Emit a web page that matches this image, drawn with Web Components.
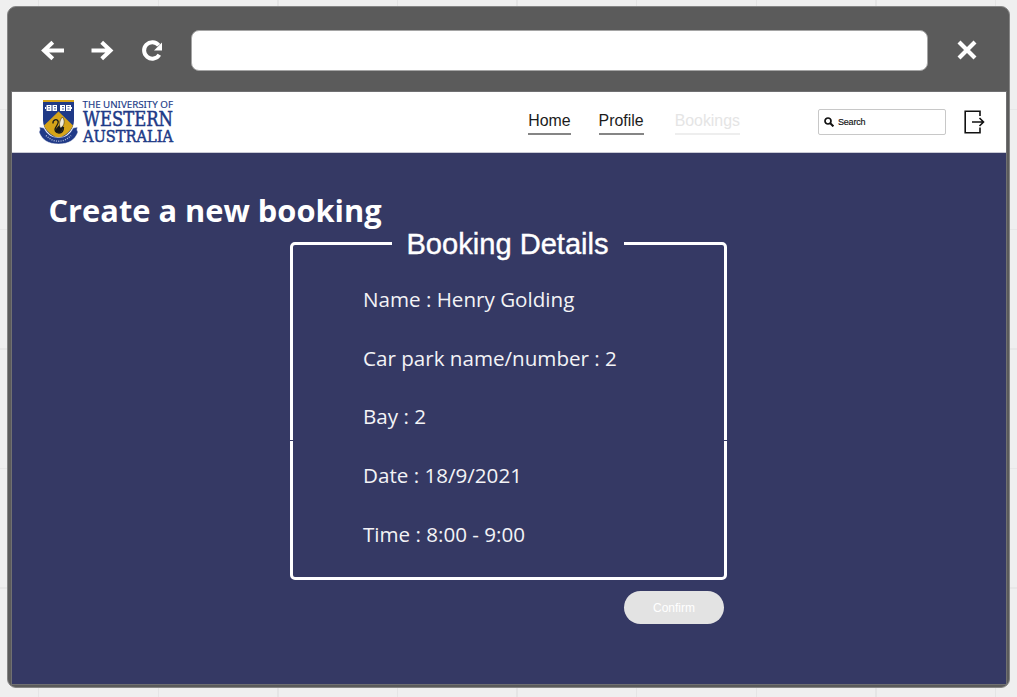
<!DOCTYPE html>
<html lang="en">
<head>
<meta charset="utf-8">
<title>Create a new booking</title>
<style>
html,body{margin:0;width:100%;height:100%;overflow:hidden}
body{font-family:"Liberation Sans",Arial,sans-serif;background-color:#efefef;
background-image:repeating-linear-gradient(90deg,transparent 0 38px,#e5e5e5 38px 39.5px,transparent 39.5px 119.6px),repeating-linear-gradient(180deg,transparent 0 109px,#e7e7e7 109px 110.5px,transparent 110.5px 119.6px)}
</style>
</head>
<body>
<browser-window>
  <site-header>
    <nav-link>Home</nav-link>
    <nav-link>Profile</nav-link>
    <nav-link current>Bookings</nav-link>
  </site-header>
  <booking-page heading="Create a new booking">
    <booking-details legend="Booking Details">
      <detail-row>Name : Henry Golding</detail-row>
      <detail-row>Car park name/number : 2</detail-row>
      <detail-row>Bay : 2</detail-row>
      <detail-row>Date : 18/9/2021</detail-row>
      <detail-row>Time : 8:00 - 9:00</detail-row>
    </booking-details>
    <confirm-button slot="action">Confirm</confirm-button>
  </booking-page>
</browser-window>
<script>
const define = (name, html, setup) => customElements.define(name, class extends HTMLElement {
  constructor() {
    super();
    this.attachShadow({mode: 'open'}).innerHTML = html;
  }
  connectedCallback() { if (setup) setup(this, this.shadowRoot); }
});

define('browser-window', `
<style>
:host{display:block;box-sizing:border-box;height:100%;padding:6px 7px 9px 7px}
.frame{box-sizing:border-box;height:100%;display:flex;flex-direction:column;background:#5b5b5b;border:1px solid #858585;border-radius:9px;padding:0 3px 3px 4px}
.bar{flex:none;box-sizing:border-box;height:85px;display:flex;align-items:center;padding:1px 24px 0 25px}
.bar svg{flex:none;display:block}
.address{flex:1;box-sizing:border-box;height:41px;margin:1px 24px 0 22px;border-radius:8px;background:#fff;border:1px solid #a5a5a5}
.view{flex:1;min-height:0;display:flex;flex-direction:column;background:#353964;box-shadow:0 0 0 1px #85858a80}
</style>
<div class="frame">
  <div class="bar">
    <svg width="132" height="30" viewBox="0 0 132 30" fill="none" stroke="#fff" stroke-width="4">
      <path d="M27 15.500H7M15.800 7.200L7 15.500l8.800 8.300"/>
      <path d="M54.500 15.500h19M64.700 7.200l8.800 8.300-8.800 8.300"/>
      <path d="M122.300 19.700A8.200 8.200 0 1 1 121.700 10.300"/>
      <path d="M125 7.500v8h-8z" fill="#fff" stroke="none"/>
    </svg>
    <div class="address"></div>
    <svg width="30" height="30" viewBox="0 0 30 30" stroke="#fff" stroke-width="4.200"><path d="M7 7l16 16M23 7L7 23"/></svg>
  </div>
  <div class="view"><slot></slot></div>
</div>`);

define('site-header', `
<style>
:host{flex:none;box-sizing:border-box;height:61px;display:flex;align-items:flex-start;background:#fff;border-bottom:1px solid #c9cad5;padding:0 21px 0 26px}
nav{display:flex;gap:28px;margin:19px 78px 0 auto}
</style>
<uwa-logo></uwa-logo>
<nav><slot></slot></nav>
<search-box></search-box>
<exit-icon></exit-icon>`);

define('uwa-logo', `
<style>
:host{display:flex;padding-top:6px}
svg{display:block;flex:none}
.words{display:block;flex:none;overflow:visible}
text{fill:#203a87;stroke:#203a87}
.small{font:9.600px "Noto Sans",sans-serif;stroke-width:.15}
.large{font-family:"DejaVu Serif Condensed","DejaVu Serif",serif;stroke-width:.5}
</style>
<svg width="42" height="50" viewBox="38 98 42 50">
  <path d="M43 100h31v20c0 9-6 15-15.500 20C49 135 43 129 43 120z" fill="#203a87"/>
  <path d="M43 100h31v2H43z" fill="#d6a419"/>
  <path d="M58.500 111.500L73 125.500c-2.500 6-8 10-14.500 13-6.500-3-12-7-14.500-13z" fill="#d6a419"/>
  <g fill="#fff"><path d="M46.500 105h5v6h-5zM52.500 105h4.500v6h-4.500zM60 105h5v6h-5zM66 105h5v6h-5z"/><path d="M45 107h1v2h-1zM71 107h1v2h-1z"/></g>
  <path d="M48 106.500h2M48 109h2M54 106.500h2M54 109h2M62 106.500h2M62 109h2M67.500 106.500h2M67.500 109h2" stroke="#203a87" stroke-width=".8"/>
  <path d="M53 123.500c-.5-3.500 4-5.500 5.200-2 .8 3-3.200 5-3.200 8 0 2 2 3.500 4 3.500 3 0 4.500-2.500 4.500-6" fill="none" stroke="#17191b" stroke-width="1.300"/>
  <path d="M55 131c.5-3 3-4 4.500-6l2.500-3c2 3 1.500 8-1 10-2 1.500-4.500 1-6-1z" fill="#17191b"/>
  <path d="M60.500 128c-2-3.500-.5-8.500 2-11 2.800 3.500 2 9-2 11z" fill="#f3ecd5" stroke="#17191b" stroke-width=".5"/>
  <path d="M39.500 127l4.500 1c3.200 6.500 8 9.500 14.500 9.500s11.500-3 14.500-9.500l4.500-1-.5 3 1 2c-3 8-9 12-19.500 12s-16.500-4-19.500-12l1-2z" fill="#203a87" stroke="#fff" stroke-width=".5"/>
  <path d="M46 135.500c4 4 8 5.700 12.500 5.700s8.500-1.700 12.500-5.700" fill="none" stroke="#aeb9d8" stroke-width="1.400" stroke-dasharray="1 1.300"/>
</svg>
<svg class="words" width="95" height="50" viewBox="80 98 95 50">
  <text class="small" x="82.500" y="108.300" textLength="90.500" lengthAdjust="spacingAndGlyphs">THE UNIVERSITY OF</text>
  <text class="large" x="83" y="126" font-size="20" textLength="90" lengthAdjust="spacingAndGlyphs">WESTERN</text>
  <text class="large" x="83" y="142" font-size="17" textLength="90" lengthAdjust="spacingAndGlyphs">AUSTRALIA</text>
</svg>`);

define('nav-link', `
<style>
:host{display:block;box-sizing:border-box;height:24px;border-bottom:2px solid #858585;font-size:15.900px;line-height:19px;color:#1b1b1b;white-space:nowrap}
:host([current]){color:#e5e5e5;border-color:#eee;margin-left:3px}
</style><slot></slot>`);

define('search-box', `
<style>
:host{flex:none;box-sizing:border-box;width:128px;height:26px;margin-top:17px;border:1px solid #c8c8c8;border-radius:2px;display:flex;align-items:center;padding-left:5px;gap:4px;font-size:9px;color:#111}
svg{display:block}
span{letter-spacing:-.2px;-webkit-text-stroke:.15px #111}
</style>
<svg width="10" height="10" viewBox="0 0 10 10" fill="none" stroke="#111" stroke-width="1.700"><circle cx="4" cy="4" r="3"/><path d="M6.300 6.300L9.400 9.400" stroke-width="2"/></svg>
<span>Search</span>`);

define('exit-icon', `
<style>:host{flex:none;display:block;margin:18px -1px 0 18px}svg{display:block}</style>
<svg width="22" height="24" viewBox="0 0 22 24" fill="none" stroke="#111" stroke-width="1.600"><path d="M16 6V1.200H1.200v21.500H16V17.500M8 12h11.500M15.500 8l4 4-4 4"/></svg>`);

define('booking-page', `
<style>
:host{flex:1;display:flex;flex-direction:column;padding:36px 279px 0 36.500px;color:#fff}
h1{font:700 30.800px/42px "Open Sans",sans-serif;margin:0;white-space:nowrap}
.form{width:437px;align-self:flex-end;display:flex;flex-direction:column;align-items:flex-end}
</style>
<h1></h1>
<div class="form"><slot></slot><slot name="action"></slot></div>`,
(el, root) => { root.querySelector('h1').textContent = el.getAttribute('heading'); });

define('booking-details', `
<style>
:host{display:block;position:relative;width:437px;margin-top:-5px}
fieldset{box-sizing:border-box;margin:0;width:437px;height:354px;border:3px solid #fff;border-radius:5px;padding:20px 0 0 70px}
legend{box-sizing:border-box;width:232px;margin-left:-36px;padding:1px 0 0;text-align:center;font-size:29.100px;line-height:34px;-webkit-text-stroke:.4px #fff;white-space:nowrap}
.seam{position:absolute;left:0;right:0;top:214px;height:1px;background:linear-gradient(90deg,#353964 3px,transparent 3px 434px,#353964 434px)}
</style>
<fieldset><legend></legend><slot></slot></fieldset><div class="seam"></div>`,
(el, root) => { root.querySelector('legend').textContent = el.getAttribute('legend'); });

define('detail-row', `
<style>:host{display:block;height:58.700px;font:400 20.600px/37px "Open Sans",sans-serif;white-space:nowrap;color:#f3f3f6}</style><slot></slot>`);

define('confirm-button', `
<style>
:host{display:block;margin:11px 3px 0 0}
button{display:block;width:100px;height:33px;border:0;border-radius:17px;padding:1px 0 0;background:#e3e3e3;color:#fff;font:12px/32px "Liberation Sans",Arial,sans-serif}
</style><button type="button"><slot></slot></button>`);
</script>
</body>
</html>
